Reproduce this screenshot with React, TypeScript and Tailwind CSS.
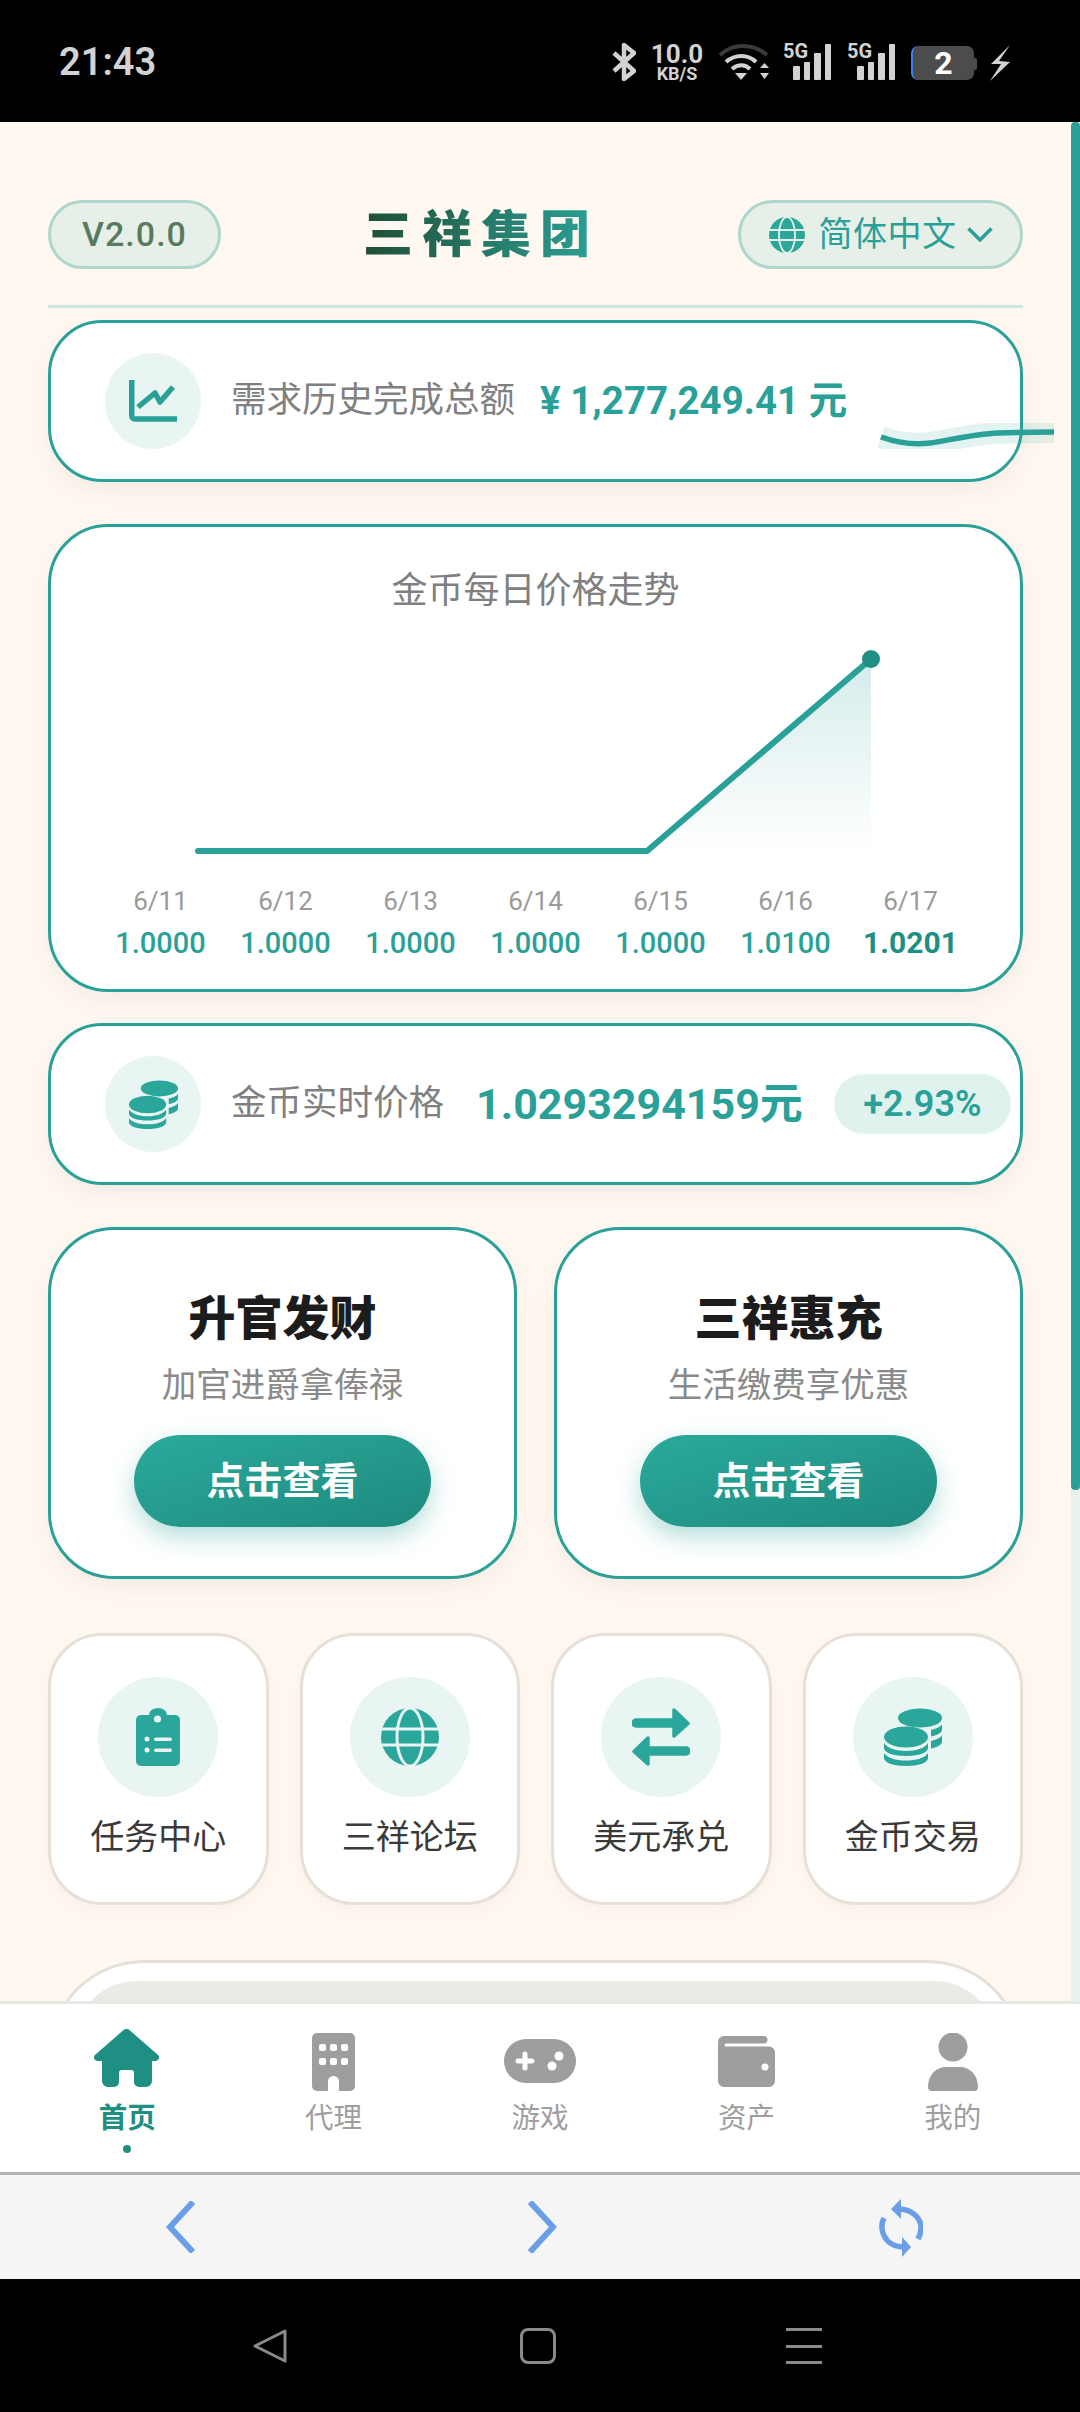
const font = { fontFamily: 'Roboto, "Noto Sans CJK SC", sans-serif' };

function Coins({ className }: { className?: string }) {
    return (
        <svg viewBox="0 0 58 58" className={className} fill="#2aa79a">
            <ellipse cx="36" cy="10" rx="22" ry="9.500" />
            <path d="M47 22c5-1 9-3 11-5.500v5c0 3-4 5.500-11 7z" />
            <path d="M47 33c5-1 9-3 11-5.500v6c0 3-4 5.500-11 7z" />
            <ellipse cx="22" cy="29" rx="22" ry="10.500" />
            <path d="M0 35c3 5 12 8 22 8s19-3 22-8v5c0 5-10 8-22 8S0 45 0 40z" />
            <path d="M0 45c3 5 12 7.500 22 7.500S41 50 44 45v5c0 5-10 8-22 8S0 55 0 50z" />
        </svg>
    );
}

function Globe({ className, line }: { className?: string; line: string }) {
    return (
        <svg viewBox="0 0 58 58" className={className}>
            <circle cx="29" cy="29" r="29" fill="#2aa79a" />
            <ellipse cx="29" cy="29" rx="13" ry="29" fill="none" stroke={line} strokeWidth="3" />
            <path d="M0 21h58M0 37h58" stroke={line} strokeWidth="3" />
        </svg>
    );
}

function TrendIcon() {
    return (
        <svg viewBox="0 0 48 42" className="w-[48px] h-[42px]" fill="none" stroke="#2aa198" strokeWidth="5.500">
            <path d="M2.750 0v36a3 3 0 0 0 3 3H48" />
            <path d="M9 27l17-14 5 9 13-15" strokeLinejoin="round" />
        </svg>
    );
}

function Clipboard() {
    return (
        <svg viewBox="0 0 44 58" className="w-[44px] h-[58px]">
            <path fill="#2aa79a" d="M5 7h8a9 7 0 0 1 18 0h8a5 5 0 0 1 5 5v41a5 5 0 0 1-5 5H5a5 5 0 0 1-5-5V12a5 5 0 0 1 5-5z" />
            <circle cx="21.500" cy="11" r="3.500" fill="#e8f5f3" />
            <circle cx="11" cy="31" r="2.500" fill="#e8f5f3" />
            <circle cx="11" cy="42" r="2.500" fill="#e8f5f3" />
            <rect x="18" y="29.500" width="18" height="3.500" rx="1.750" fill="#e8f5f3" />
            <rect x="18" y="40.500" width="18" height="3.500" rx="1.750" fill="#e8f5f3" />
        </svg>
    );
}

function Swap() {
    return (
        <svg viewBox="0 0 58 58" className="w-[58px] h-[58px]" fill="#2aa79a" stroke="#2aa79a" strokeWidth="3.500" strokeLinejoin="round">
            <path d="M4 12h38V2l14 13.500L42 28V18H4a3 3 0 0 1 0-6z" />
            <path d="M54 40H16V30L2 43.500 16 56V46h38a3 3 0 0 0 0-6z" />
        </svg>
    );
}

function QuickCard({ label, icon }: { label: string; icon: React.ReactNode }) {
    return (
        <div className="flex flex-col items-center bg-white border-[3px] border-[#e6e0d6] rounded-[54px] pt-[41px] h-[272px] shadow-[0_6px_16px_rgba(120,100,70,0.05)]">
            <div className="w-[120px] h-[120px] rounded-full bg-[#e8f5f3] flex items-center justify-center">{icon}</div>
            <span className="mt-[20px] text-[34px] leading-[40px] text-[#3a3a3a]">{label}</span>
        </div>
    );
}

function PromoCard({ title, sub }: { title: string; sub: string }) {
    return (
        <div className="flex-1 h-[352px] flex flex-col items-center bg-white border-[3px] border-[#2aa198] rounded-[66px] pt-[61px] shadow-[0_10px_24px_rgba(120,100,70,0.07)]">
            <h2 className="text-[47px] leading-[56px] font-black text-[#1c1c1c]">{title}</h2>
            <p className="mt-[16px] text-[34.5px] leading-[44px] text-[#8a8a8a]">{sub}</p>
            <button className="mt-[28px] w-[297px] h-[92px] rounded-full bg-linear-to-br from-[#2aaa9c] to-[#1e8a7e] text-white text-[38px] font-bold shadow-[0_10px_24px_rgba(42,161,152,0.35)]">点击查看</button>
        </div>
    );
}

const days = [
    ["6/11", "1.0000"],
    ["6/12", "1.0000"],
    ["6/13", "1.0000"],
    ["6/14", "1.0000"],
    ["6/15", "1.0000"],
    ["6/16", "1.0100"],
    ["6/17", "1.0201"],
];

function NavItem({ label, active, icon }: { label: string; active?: boolean; icon: React.ReactNode }) {
    return (
        <div className="flex-1 flex flex-col items-center">
            <div className="h-[62px] flex items-end justify-center">{icon}</div>
            <span className={`mt-[12px] text-[28.5px] leading-[32px] ${active ? "text-[#1e8f82] font-semibold" : "text-[#9e9e9e]"}`}>{label}</span>
            {active && <span className="mt-[10px] w-[8px] h-[8px] rounded-full bg-[#1e8f82]" />}
        </div>
    );
}

function Signal({ className }: { className?: string }) {
    return (
        <div className={`relative w-[48px] h-[37px] ${className}`}>
            <span className="absolute left-0 -top-[1px] text-[20px] leading-[18px] font-bold">5G</span>
            <div className="absolute right-0 bottom-0 flex items-end gap-[4px]">
                <span className="w-[6.5px] h-[14px] bg-[#d2d2d2] rounded-[1px]" />
                <span className="w-[6.5px] h-[18px] bg-[#d2d2d2] rounded-[1px]" />
                <span className="w-[6.5px] h-[27px] bg-[#d2d2d2] rounded-[1px]" />
                <span className="w-[6.5px] h-[36px] bg-[#d2d2d2] rounded-[1px]" />
            </div>
        </div>
    );
}

function StatusBar() {
    return (
        <div className="h-[122px] bg-black flex items-start justify-between pl-[59px] pr-[69px] text-[#d2d2d2]">
            <span className="mt-[39px] text-[38px] leading-[46px] font-semibold">21:43</span>
            <div className="mt-[43px] flex items-start">
                <svg viewBox="0 0 24 38" className="w-[24px] h-[38px]" fill="none" stroke="#d2d2d2" strokeWidth="4.500">
                    <path d="M2 10l20 18-10 8V2l10 8L2 28" strokeLinejoin="round" />
                </svg>
                <div className="ml-[14px] w-[54px] flex flex-col items-center font-bold">
                    <span className="text-[26px] leading-[22px]">10.0</span>
                    <span className="text-[18px] leading-[17px]">KB/S</span>
                </div>
                <svg viewBox="0 0 50 38" className="ml-[15px] w-[50px] h-[38px]" fill="none">
                    <path d="M1 12c13-12 33-12 47 0" stroke="#3a3a3a" strokeWidth="4" />
                    <path d="M7 19c9-8 22-8 30 0" stroke="#d2d2d2" strokeWidth="4" />
                    <path d="M13 26c6-5 13-5 18 0" stroke="#d2d2d2" strokeWidth="4" />
                    <path d="M16 30h12l-6 7z" fill="#d2d2d2" />
                    <path d="M41 25h9l-4.500-5zM41 30h9l-4.500 6z" fill="#d2d2d2" />
                </svg>
                <Signal className="ml-[14px]" />
                <Signal className="ml-[16px]" />
                <div className="ml-[16px] mt-[3px] w-[63px] h-[34px] rounded-[7px] bg-[#4c4c4c] border-l-[2px] border-l-[#3b82f6] flex items-center justify-center text-white text-[32px] font-bold">2</div>
                <span className="mt-[15px] w-[3px] h-[12px] bg-[#4c4c4c] rounded-r-[2px]" />
                <svg viewBox="0 0 21 36" className="ml-[13px] mt-[2px] w-[21px] h-[36px]" fill="#d2d2d2">
                    <path d="M20 0L1 19h10L0 36l20-19-11-1z" />
                </svg>
            </div>
        </div>
    );
}

export default function App() {
    return (
        <div className="w-[1080px] h-[2412px] flex flex-col overflow-hidden" style={font}>
            <StatusBar />

            <main className="relative flex-1 min-h-0 overflow-hidden bg-[#fff8f1] pt-[78px] pl-[48px] pr-[57px]">
                {/* scrollbar */}
                <div className="absolute right-0 top-0 w-[9px] h-[1368px] bg-[#2aa198] rounded-[4px]" />
                <div className="absolute right-0 top-[1368px] bottom-0 w-[9px] bg-[#e8f1ec]" />

                <header className="flex items-center justify-between h-[69px]">
                    <div className="w-[173px] h-[69px] rounded-full border-[3px] border-[#aed6cc] bg-[#e6f0e8] flex items-center justify-center text-[34px] font-medium tracking-[1px] text-[#5a7a60]">V2.0.0</div>
                    <h1 className="text-[50px] leading-[60px] font-black tracking-[9px] bg-linear-to-r from-[#1f4f36] to-[#2aa198] bg-clip-text text-transparent ml-[3px]">三祥集团</h1>
                    <div className="w-[285px] h-[69px] rounded-full border-[3px] border-[#aed6cc] bg-[#e6f0e8] flex items-center justify-center text-[#2aa198]">
                        <Globe className="w-[36px] h-[36px]" line="#e6f0e8" />
                        <span className="ml-[14px] text-[34px] tracking-[0.5px]">简体中文</span>
                        <svg viewBox="0 0 26 15" className="ml-[10px] w-[26px] h-[15px]" fill="none" stroke="#2aa198" strokeWidth="3.500"><path d="M1.500 1.500L13 13 24.500 1.500" /></svg>
                    </div>
                </header>
                <div className="mt-[36px] h-[3px] bg-[#cfe5dd]" />

                <section className="relative mt-[12px] h-[162px] flex items-center bg-white border-[3px] border-[#2aa198] rounded-[54px] pl-[54px] shadow-[0_10px_24px_rgba(120,100,70,0.07)]">
                    <div className="w-[96px] h-[96px] rounded-full bg-[#e8f5f3] flex items-center justify-center"><TrendIcon /></div>
                    <span className="ml-[30px] text-[35.5px] text-[#808080]">需求历史完成总额</span>
                    <span className="ml-[25px] text-[38.5px] font-bold text-[#2aa198]">¥ 1,277,249.41 元</span>
                    <svg viewBox="0 0 180 26" className="absolute left-[827px] top-[100px] w-[180px] h-[26px]" fill="none">
                        <path d="M3 14C20 20 36 22 52 20S95 11 120 10 160 9 176 9" stroke="#2aa198" strokeOpacity="0.13" strokeWidth="22" />
                        <path d="M3 14C20 20 36 22 52 20S95 11 120 10 160 9 176 9" stroke="#2aa198" strokeWidth="5.500" />
                    </svg>
                </section>

                <section className="mt-[42px] h-[468px] bg-white border-[3px] border-[#2aa198] rounded-[60px] pt-[36px] shadow-[0_10px_24px_rgba(120,100,70,0.07)] flex flex-col">
                    <div className="text-center text-[36px] leading-[56px] text-[#808080]">金币每日价格走势</div>
                    <svg viewBox="0 0 969 212" className="mt-[30px] w-full h-[212px] shrink-0">
                        <defs>
                            <linearGradient id="area" x1="0" y1="0" x2="0" y2="1">
                                <stop offset="0" stopColor="#2aa198" stopOpacity="0.2" />
                                <stop offset="1" stopColor="#2aa198" stopOpacity="0" />
                            </linearGradient>
                        </defs>
                        <path d="M596 202L820 10V202z" fill="url(#area)" />
                        <path d="M147 202H596L820 10" fill="none" stroke="#2aa198" strokeWidth="6" strokeLinecap="round" />
                        <circle cx="820" cy="10" r="9" fill="#1e8f82" />
                    </svg>
                    <div className="mt-[24px] grid grid-cols-7 pl-[47px] pr-[47px]">
                        {days.map(([d, v], i) => (
                            <div key={d} className="flex flex-col items-center">
                                <span className="text-[26px] leading-[32px] text-[#9a9a9a]">{d}</span>
                                <span className={`mt-[9px] leading-[34px] ${i === 6 ? "text-[30px] font-bold text-[#1e8f82]" : "text-[29px] font-medium text-[#2aa198]"}`}>{v}</span>
                            </div>
                        ))}
                    </div>
                </section>

                <section className="mt-[31px] h-[162px] flex items-center bg-white border-[3px] border-[#2aa198] rounded-[54px] pl-[54px] shadow-[0_10px_24px_rgba(120,100,70,0.07)]">
                    <div className="w-[96px] h-[96px] rounded-full bg-[#e8f5f3] flex items-center justify-center"><Coins className="w-[49px] h-[49px]" /></div>
                    <span className="ml-[30px] text-[35.5px] text-[#808080]">金币实时价格</span>
                    <span className="ml-[32px] text-[43px] font-bold text-[#2aa198]">1.0293294159元</span>
                    <span className="ml-[31px] w-[177px] h-[60px] rounded-full bg-[#e0f2ee] flex items-center justify-center text-[36px] font-semibold text-[#2aa198]">+2.93%</span>
                </section>

                <div className="mt-[42px] flex gap-[37px]">
                    <PromoCard title="升官发财" sub="加官进爵拿俸禄" />
                    <PromoCard title="三祥惠充" sub="生活缴费享优惠" />
                </div>

                <div className="mt-[54px] grid grid-cols-4 gap-[31px]">
                    <QuickCard label="任务中心" icon={<Clipboard />} />
                    <QuickCard label="三祥论坛" icon={<Globe className="w-[58px] h-[58px]" line="#e8f5f3" />} />
                    <QuickCard label="美元承兑" icon={<Swap />} />
                    <QuickCard label="金币交易" icon={<Coins className="w-[58px] h-[58px]" />} />
                </div>

                <div className="mt-[55px] h-[200px] bg-white border-[3px] border-[#e6e0d6] rounded-[96px] pt-[18px] px-[25px]">
                    <div className="h-[60px] rounded-t-[66px] bg-linear-to-b from-[#eeece6] to-[#dfe6e0]" />
                </div>
            </main>

            <nav className="h-[171px] shrink-0 bg-white border-t-[3px] border-[#e5e9e4] flex px-[24px] pt-[25px]">
                <NavItem active label="首页" icon={
                    <svg viewBox="0 0 66 58" className="w-[66px] h-[58px] mb-[4px]" fill="#1e8f82"><path d="M29 1.500a5 5 0 0 1 7 0L64 26a3.500 3.500 0 0 1-2.500 6H58v20a6 6 0 0 1-6 6h-7a5 5 0 0 1-5-5V44a3 3 0 0 0-3-3h-9a3 3 0 0 0-3 3v9a5 5 0 0 1-5 5h-6a6 6 0 0 1-6-6V32H3.500A3.500 3.500 0 0 1 1 26z" /></svg>
                } />
                <NavItem label="代理" icon={
                    <svg viewBox="0 0 43 58" className="w-[43px] h-[58px]">
                        <rect width="43" height="58" rx="5" fill="#9e9e9e" />
                        <g fill="#fff">
                            <rect x="7" y="11" width="7" height="7" rx="2" />
                            <rect x="18" y="11" width="7" height="7" rx="2" />
                            <rect x="29" y="11" width="7" height="7" rx="2" />
                            <rect x="7" y="25" width="7" height="7" rx="2" />
                            <rect x="18" y="25" width="7" height="7" rx="2" />
                            <rect x="29" y="25" width="7" height="7" rx="2" />
                            <path d="M16 58V48.500a5.500 5.500 0 0 1 11 0V58z" />
                        </g>
                    </svg>
                } />
                <NavItem label="游戏" icon={
                    <svg viewBox="0 0 72 44" className="w-[72px] h-[44px] mb-[8px]">
                        <rect width="72" height="44" rx="22" fill="#9e9e9e" />
                        <path d="M21 15v14M14 22h14" stroke="#fff" strokeWidth="5" strokeLinecap="round" />
                        <circle cx="55" cy="17" r="4.500" fill="#fff" />
                        <circle cx="48" cy="27" r="4.500" fill="#fff" />
                    </svg>
                } />
                <NavItem label="资产" icon={
                    <svg viewBox="0 0 57 51" className="w-[57px] h-[51px] mb-[4px]" fill="#9e9e9e">
                        <path d="M6 0h41a4 4 0 0 1 0 7.500H8a1.500 1.500 0 0 0 0 3h43a6 6 0 0 1 6 6V45a6 6 0 0 1-6 6H6a6 6 0 0 1-6-6V6a6 6 0 0 1 6-6z" />
                        <circle cx="47" cy="31" r="3.500" fill="#fff" />
                    </svg>
                } />
                <NavItem label="我的" icon={
                    <svg viewBox="0 0 50 58" className="w-[50px] h-[58px]" fill="#9e9e9e">
                        <circle cx="25" cy="14" r="14.500" />
                        <path d="M18 34h14c10 0 18 8 18 20a4 4 0 0 1-3 4H3a4 4 0 0 1-3-4C0 42 8 34 18 34z" />
                    </svg>
                } />
            </nav>

            <div className="h-[107px] shrink-0 bg-[#f5f5f5] border-t-[3px] border-[#b3b3b3] flex items-center pl-[166px]">
                <svg viewBox="0 0 30 52" className="w-[30px] h-[52px]" fill="none" stroke="#6a9ee8" strokeWidth="6"><path d="M27 1L4 26l23 25" /></svg>
                <svg viewBox="0 0 30 52" className="ml-[331px] w-[30px] h-[52px]" fill="none" stroke="#6a9ee8" strokeWidth="6"><path d="M3 1l23 25L3 51" /></svg>
                <svg viewBox="18 7 44 60" className="ml-[322px] w-[44px] h-[60px]" fill="none" stroke="#6a9ee8" strokeWidth="5.500">
                    <path d="M38 19C51 19 59 28 60 36 60.500 41 59 45 57 49" />
                    <path d="M23 28C18 38 22 56 42 57" />
                    <path d="M30 19L40 9V29z" fill="#6a9ee8" stroke="none" />
                    <path d="M50 57L41 47V67z" fill="#6a9ee8" stroke="none" />
                </svg>
            </div>

            <div className="h-[133px] shrink-0 bg-black flex items-start pl-[252px] pt-[49px]">
                <svg viewBox="0 0 35 36" className="w-[35px] h-[36px]" fill="none" stroke="#8a8a8a" strokeWidth="3"><path d="M33 3L3 18l30 15z" strokeLinejoin="round" /></svg>
                <div className="ml-[233px] w-[36px] h-[36px] border-[3px] border-[#8a8a8a] rounded-[8px]" />
                <div className="ml-[230px] w-[36px] h-[36px] flex flex-col justify-between">
                    <span className="h-[3px] bg-[#8a8a8a]" />
                    <span className="h-[3px] bg-[#8a8a8a]" />
                    <span className="h-[3px] bg-[#8a8a8a]" />
                </div>
            </div>
        </div>
    );
}
